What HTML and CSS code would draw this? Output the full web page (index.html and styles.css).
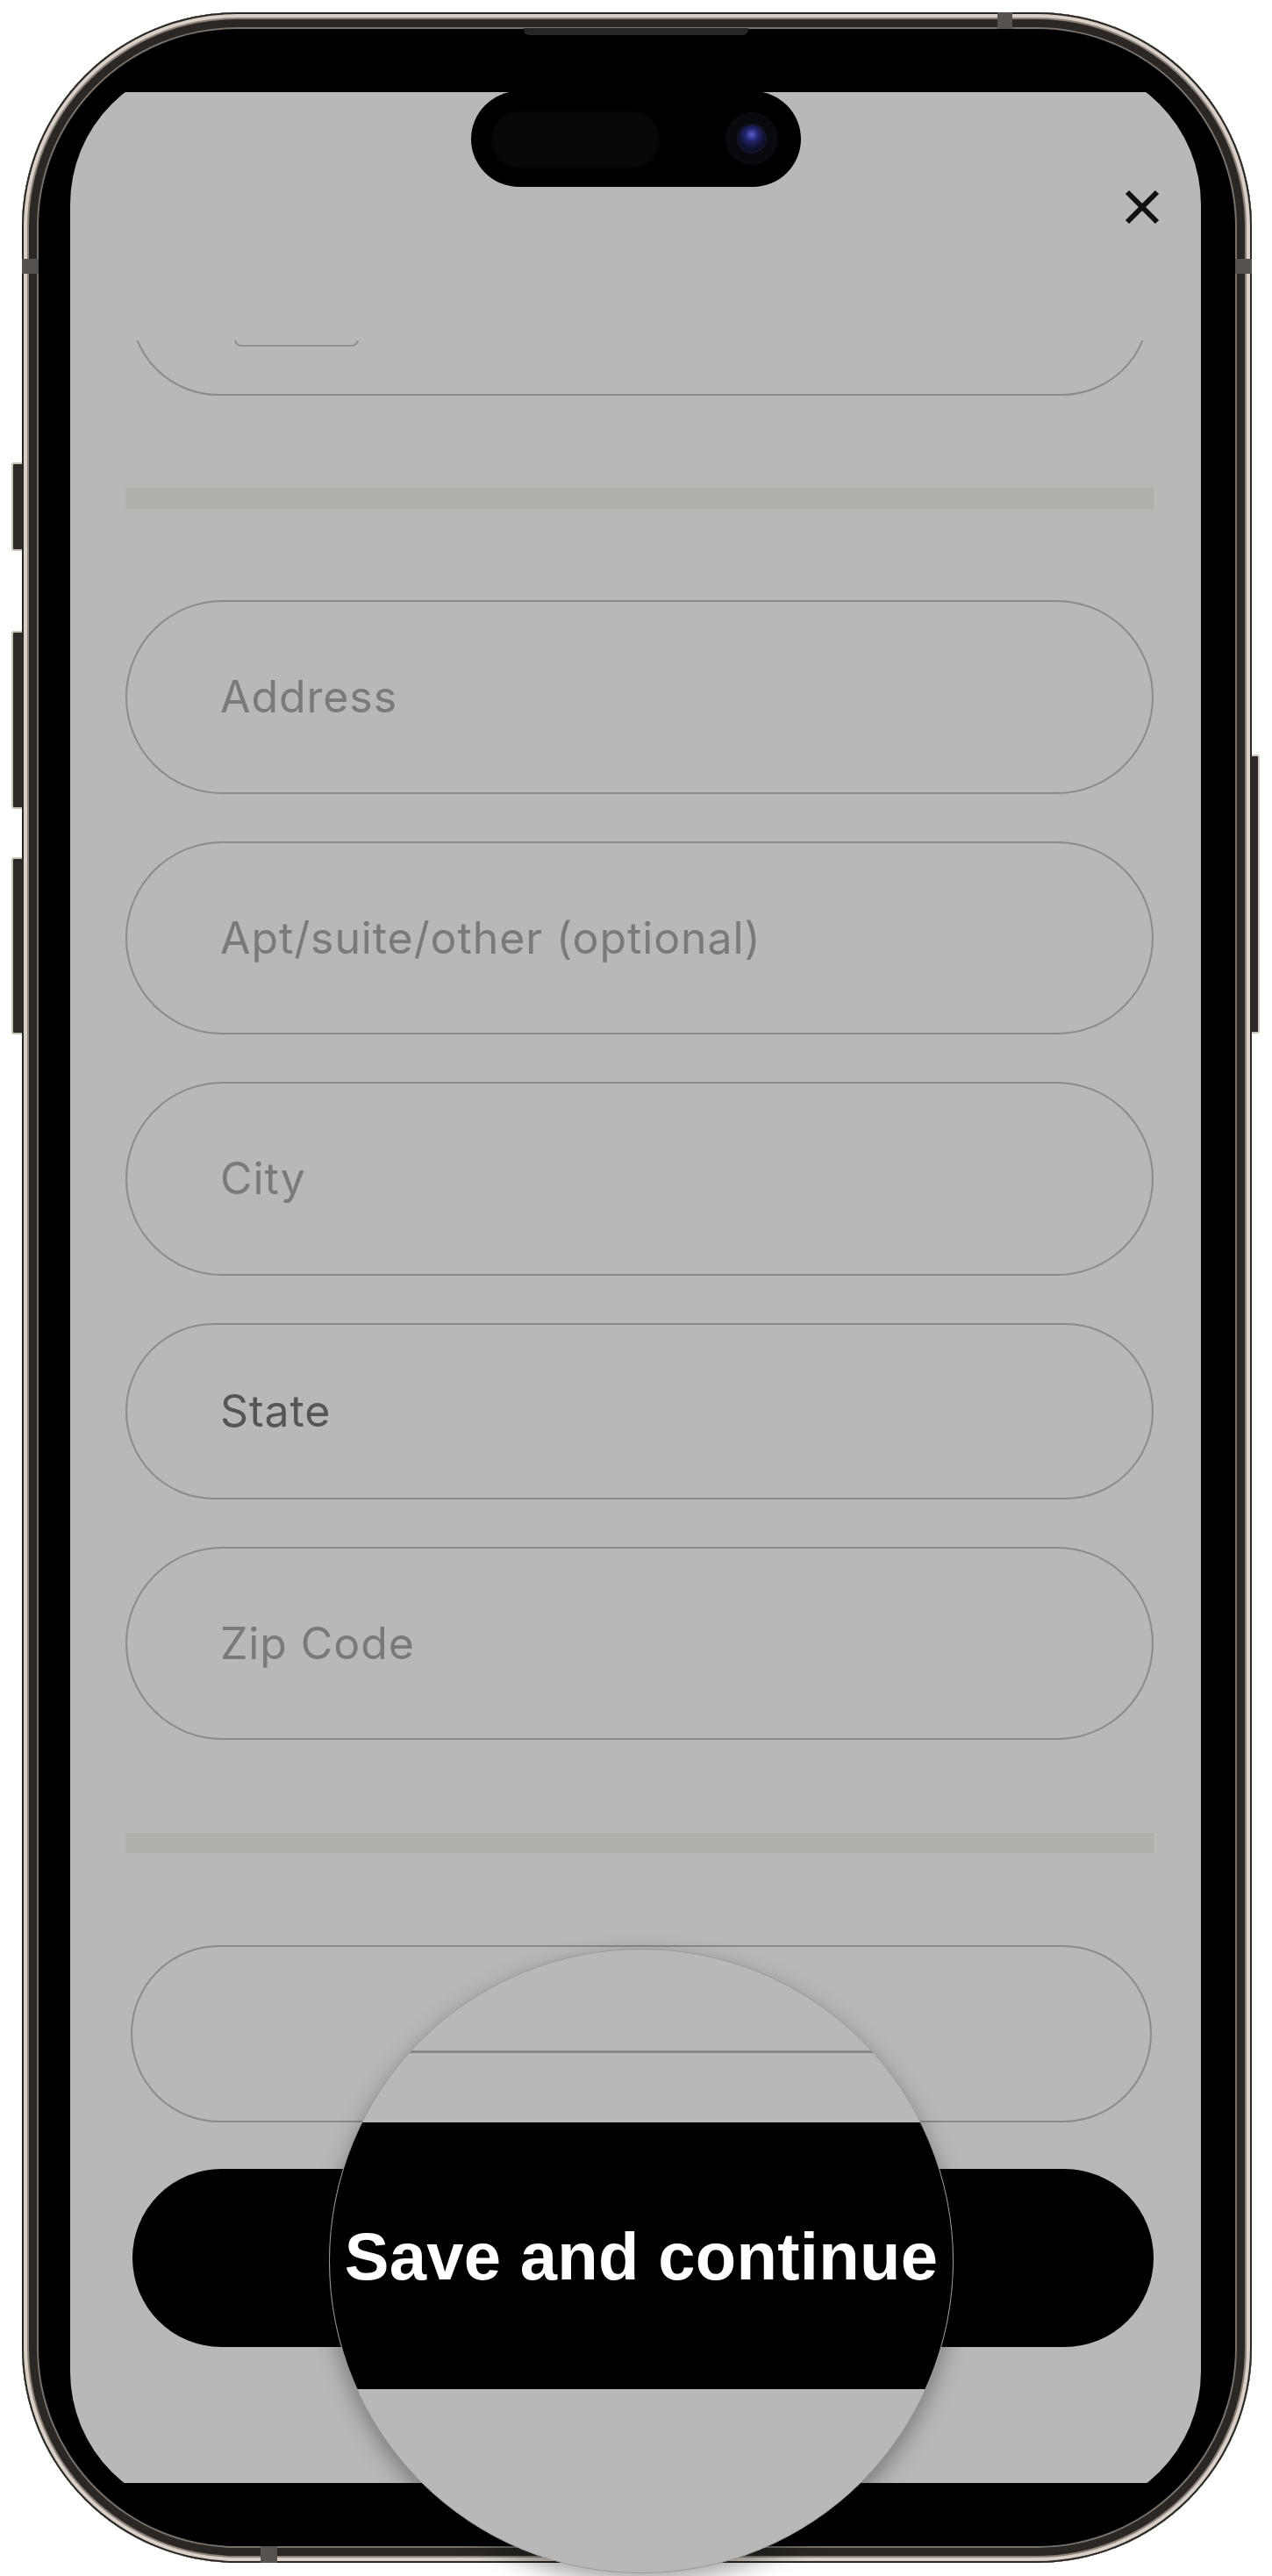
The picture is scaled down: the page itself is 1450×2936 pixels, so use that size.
FILE: index.html
```html
<!DOCTYPE html>
<html lang="en">
<head>
<meta charset="utf-8">
<title>Address form</title>
<link rel="stylesheet" href="styles.css">
</head>
<body>
<div class="stage">
  <div class="phone">
    <span class="hw hw-l1"></span>
    <span class="hw hw-l2"></span>
    <span class="hw hw-l3"></span>
    <span class="hw hw-r1"></span>
    <span class="ant ant-left"></span>
    <span class="ant ant-right"></span>
    <span class="ant ant-top"></span>
    <span class="ant ant-bottom"></span>
    <span class="speaker"></span>
    <div class="display">
      <div class="bar-top"></div>
      <div class="content">
        <div class="island">
          <span class="island-pill"></span>
          <span class="camera"><span class="lens"></span></span>
        </div>
        <div class="header">
          <button class="close" aria-label="Close">
            <svg width="40" height="40" viewBox="0 0 40 40"><path d="M3 3 L37 37 M37 3 L3 37" stroke="#111" stroke-width="6" fill="none"/></svg>
          </button>
        </div>
        <div class="clip">
          <div class="field field-top"><span class="inner-box"></span></div>
        </div>
        <div class="divider divider-1"></div>
        <div class="fields">
          <div class="field"><span class="ph">Address</span></div>
          <div class="field"><span class="ph">Apt/suite/other (optional)</span></div>
          <div class="field"><span class="ph">City</span></div>
          <div class="field field-state"><span class="val">State</span></div>
          <div class="field"><span class="ph">Zip Code</span></div>
        </div>
        <div class="divider divider-2"></div>
        <div class="field field-last"></div>
        <button class="save" aria-label="Save and continue"></button>
      </div>
      <div class="bar-bottom"></div>
    </div>
  </div>
  <div class="magnifier">
    <div class="mag-line"></div>
    <div class="mag-band">Save and continue</div>
  </div>
</div>
</body>
</html>
```
FILE: styles.css
```css
* { box-sizing: border-box; }
html, body { margin: 0; padding: 0; background: #ffffff; }
.stage {
  position: relative;
  width: 1450px;
  height: 2936px;
  padding: 14px 0 0 25px;
  background: #ffffff;
}
.phone {
  position: relative;
  width: 1402px;
  height: 2907px;
  border-radius: 245px;
  background: #000;
  padding: 57px 58px 56px 55px;
  box-shadow:
    inset 0 0 0 2px #2a2724,
    inset 0 0 0 6px #d9d1c7,
    inset 0 0 0 8px #8a837b,
    inset 0 0 0 17px #2a2724,
    inset 0 0 0 19px #77706a;
}
.hw {
  position: absolute;
  background: #2c2926;
  border: 2px solid #cbc3b9;
}
.hw-l1, .hw-l2, .hw-l3 { left: -12px; width: 12px; border-right: none; border-radius: 3px 0 0 3px; }
.hw-l1 { top: 513px; height: 101px; }
.hw-l2 { top: 705px; height: 203px; }
.hw-l3 { top: 963px; height: 202px; }
.hw-r1 { right: -9px; top: 846px; width: 9px; height: 318px; border-left: none; border-radius: 0 3px 3px 0; }
.ant { position: absolute; background: #55524f; }
.ant-left { left: 0; top: 281px; width: 19px; height: 17px; }
.ant-right { right: 0; top: 281px; width: 19px; height: 17px; }
.ant-top { top: 0; left: 1112px; width: 17px; height: 19px; }
.ant-bottom { bottom: 0; left: 272px; width: 19px; height: 19px; }
.speaker {
  position: absolute;
  top: 18px;
  left: 572px;
  width: 256px;
  height: 8px;
  background: #262626;
  border-radius: 0 0 6px 6px;
}
.display {
  width: 1289px;
  height: 2794px;
  border-radius: 162px;
  overflow: hidden;
  background: #000;
  display: flex;
  flex-direction: column;
}
.bar-top { height: 34px; background: #000; flex: none; }
.bar-bottom { height: 35px; background: #000; flex: none; }
.content {
  position: relative;
  flex: none;
  height: 2725px;
  background: #b8b8b8;
  display: flex;
  flex-direction: column;
  font-family: "Inter", "Open Sans", sans-serif;
}
.island {
  position: absolute;
  left: 457px;
  top: -1px;
  width: 376px;
  height: 109px;
  border-radius: 55px;
  background: #000;
}
.island-pill {
  position: absolute;
  left: 23px;
  top: 23px;
  width: 192px;
  height: 64px;
  border-radius: 32px;
  background: #070707;
}
.camera {
  position: absolute;
  left: 290px;
  top: 24px;
  width: 60px;
  height: 60px;
  border-radius: 50%;
  background: #09090e;
  display: flex;
  align-items: center;
  justify-content: center;
}
.lens {
  width: 30px;
  height: 30px;
  border-radius: 50%;
  background: radial-gradient(circle at 50% 35%, #5b5fd0 0, #22246a 30%, #101230 60%, #0b0c1a 100%);
  box-shadow: 0 0 0 2px #14162c;
}
.header {
  height: 283px;
  flex: none;
  display: flex;
  justify-content: flex-end;
  align-items: flex-start;
  padding: 111px 47px 0 0;
}
.close {
  width: 40px;
  height: 40px;
  padding: 0;
  border: none;
  background: transparent;
  display: block;
}
.close svg { display: block; }
.clip {
  height: 67px;
  flex: none;
  overflow: hidden;
  padding: 0 58px 0 68px;
}
.field {
  height: 220.5px;
  border: 2px solid #8b8b8b;
  border-radius: 111px;
  display: flex;
  align-items: center;
  padding-left: 106px;
  flex: none;
}
.field-top {
  height: 202px;
  margin-top: -139px;
  align-items: flex-start;
  padding-left: 117px;
}
.inner-box {
  display: block;
  width: 142px;
  height: 46px;
  margin-top: 98px;
  border: 2px solid #8f8f8f;
  border-radius: 8px;
}
.divider {
  height: 24px;
  width: 1172px;
  margin-left: 63px;
  background: #b0b0ab;
  flex: none;
}
.divider-1 { margin-top: 101px; }
.divider-2 { margin-top: 106px; height: 23px; }
.fields {
  display: flex;
  flex-direction: column;
  gap: 54px;
  margin: 104px 0 0 63px;
  width: 1172px;
}
.field-state { height: 201px; }
.ph, .val {
  font-size: 50px;
  letter-spacing: 0.9px;
  line-height: 1;
  color: #7a7a7a;
}
.val { color: #555555; }
.field-last {
  height: 202px;
  width: 1164px;
  margin: 105px 0 0 69px;
}
.save {
  flex: none;
  height: 203px;
  width: 1164px;
  margin: 53px 0 0 71px;
  border: none;
  border-radius: 102px;
  background: #000;
  padding: 0;
}
.magnifier {
  position: absolute;
  left: 375px;
  top: 2221px;
  width: 712px;
  height: 712px;
  border-radius: 50%;
  overflow: hidden;
  background: #b8b8b8;
  border: 1.5px solid #9a9a9a;
  box-shadow: 0 10px 26px rgba(0, 0, 0, 0.35);
  display: flex;
  flex-direction: column;
}
.mag-line {
  height: 3px;
  margin-top: 115px;
  background: #878787;
  flex: none;
}
.mag-band {
  flex: none;
  height: 304px;
  margin-top: 79px;
  background: #000;
  color: #fff;
  font-family: "Liberation Sans", Arial, sans-serif;
  font-weight: 700;
  font-size: 76px;
  letter-spacing: 0.3px;
  display: flex;
  align-items: center;
  justify-content: center;
}
```
